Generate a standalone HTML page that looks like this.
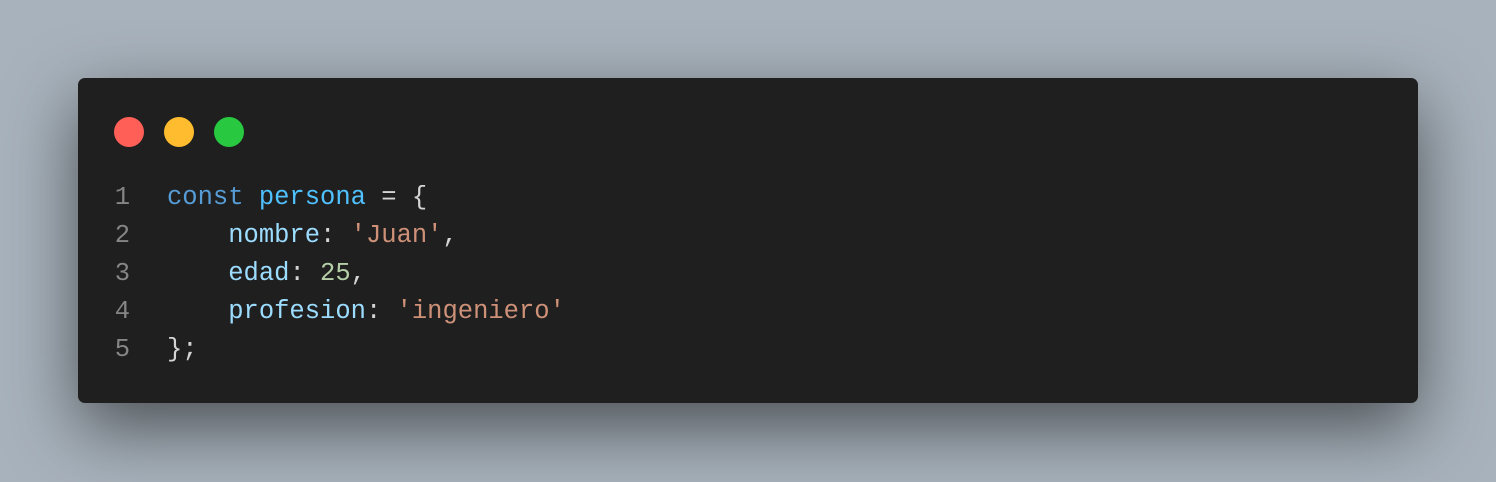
<!DOCTYPE html>
<html><head><meta charset="utf-8"><style>
html,body{margin:0;padding:0;width:1496px;height:482px;overflow:hidden;background:#a8b2bc;}
.card{position:absolute;left:78px;top:78px;width:1340px;height:325px;background:#1f1f1f;border-radius:7px;box-shadow:0 25px 70px rgba(0,0,0,0.55);}
.dot{position:absolute;top:39px;width:30px;height:30px;border-radius:50%;}
.code{position:absolute;left:0;top:101px;font-family:"Liberation Mono",monospace;font-size:25.5px;line-height:38px;white-space:pre;color:#d4d4d4;}
.ln{display:inline-block;width:52px;text-align:right;color:#858585;margin-right:37px;}
.k{color:#569cd6}.v{color:#4fc1ff}.p{color:#9cdcfe}.s{color:#ce9178}.n{color:#b5cea8}
</style></head><body>
<div class="card">
<div class="dot" style="left:36px;background:#ff5f57"></div>
<div class="dot" style="left:86px;background:#febc2e"></div>
<div class="dot" style="left:136px;background:#28c840"></div>
<div class="code"><div><span class="ln">1</span><span class="k">const</span> <span class="v">persona</span> = {</div><div><span class="ln">2</span>    <span class="p">nombre</span>: <span class="s">'Juan'</span>,</div><div><span class="ln">3</span>    <span class="p">edad</span>: <span class="n">25</span>,</div><div><span class="ln">4</span>    <span class="p">profesion</span>: <span class="s">'ingeniero'</span></div><div><span class="ln">5</span>};</div></div>
</div>
</body></html>
